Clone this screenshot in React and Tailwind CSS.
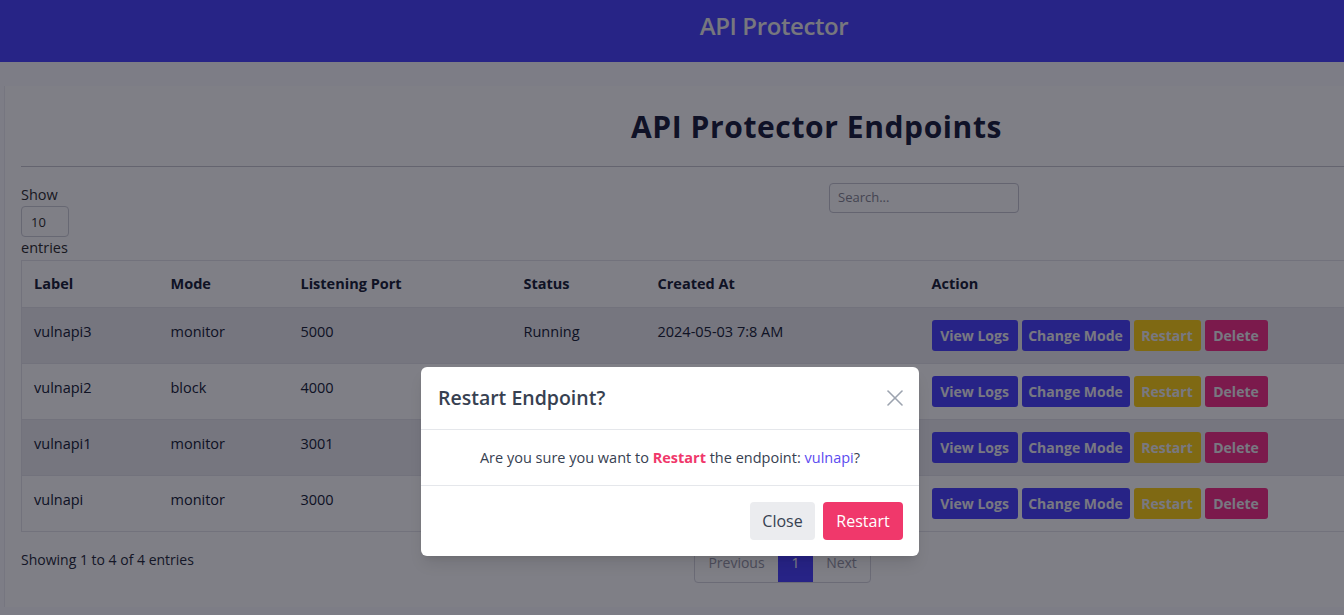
import { X } from 'lucide-react';

const rows = [
  { label: 'vulnapi3', mode: 'monitor', port: '5000', status: 'Running', created: '2024-05-03 7:8 AM' },
  { label: 'vulnapi2', mode: 'block', port: '4000', status: 'Running', created: '2024-05-03 7:8 AM' },
  { label: 'vulnapi1', mode: 'monitor', port: '3001', status: 'Running', created: '2024-05-03 7:8 AM' },
  { label: 'vulnapi', mode: 'monitor', port: '3000', status: 'Running', created: '2024-05-03 7:8 AM' },
];

const font = { fontFamily: '"Open Sans", "Noto Sans", sans-serif' };

export default function App() {
  return (
    <div className="relative w-[1344px] h-[615px] overflow-hidden bg-[#fbfbff] text-[#1f2937]" style={font}>
      {/* Navbar */}
      <nav className="h-[62px] w-[1548px] bg-[#4f48fe] flex items-center justify-center">
        <span className="text-[24px] font-semibold text-[#eeeeee] -mt-[10px] tracking-[-0.4px]">API Protector</span>
      </nav>

      {/* Card */}
      <div className="mt-[24px] ml-[4px] w-[1624px] bg-[#fefeff] border-l border-[#ececf2] px-4 pb-6">
        <h1 className="text-[30px] font-bold text-[#1e2440] text-center pt-[18px] pb-[17px] tracking-[0.6px]">
          API Protector Endpoints
        </h1>
        <hr className="border-[#c8c8d0]" />

        <div className="flex mt-[16px]">
          <div className="w-[808px] text-[14.5px] leading-[20px] text-[#333]">
            <div className="mt-[2px]">Show</div>
            <div className="w-[48px] h-[31px] border border-[#cfd0d8] rounded-[4px] flex items-center pl-[9px] text-[13px] mt-[1px]">10</div>
            <div className="mt-[1px]">entries</div>
          </div>
          <div>
            <div className="w-[190px] h-[30px] border border-[#c8c9d2] rounded-[4px] flex items-center pl-[8px] text-[13px] text-[#8a8a96]">
              Search...
            </div>
          </div>
        </div>

        <table className="mt-[2px] w-[1600px] table-fixed border border-[#e4e4ea] text-[14.5px] text-[#20263a]">
          <thead>
            <tr className="h-[47px] text-left">
              <th className="pl-[12px] w-[149px] font-bold">Label</th>
              <th className="w-[130px] font-bold">Mode</th>
              <th className="w-[223px] font-bold">Listening Port</th>
              <th className="w-[134px] font-bold">Status</th>
              <th className="w-[274px] font-bold">Created At</th>
              <th className="font-bold">Action</th>
            </tr>
          </thead>
          <tbody>
            {rows.map((r, i) => (
              <tr key={r.label} className={`h-[56px] border-t border-[#e4e4ea] ${i % 2 === 0 ? 'bg-[#ececf0]' : ''}`}>
                <td className="pl-[12px] align-top pt-[13px]">{r.label}</td>
                <td className="align-top pt-[13px]">{r.mode}</td>
                <td className="align-top pt-[13px]">{r.port}</td>
                <td className="align-top pt-[13px]">{i === 0 ? r.status : ''}</td>
                <td className="align-top pt-[13px]">{i === 0 ? r.created : ''}</td>
                <td className="align-top pt-[12px]">
                  <div className="flex gap-[4px] text-[14px] font-bold text-[#f0f0f5]">
                    <span className="h-[31px] w-[86px] rounded-[3px] bg-[#4f46fe] flex items-center justify-center">View Logs</span>
                    <span className="h-[31px] w-[108px] rounded-[3px] bg-[#4f46fe] flex items-center justify-center">Change Mode</span>
                    <span className="h-[31px] w-[67px] rounded-[3px] bg-[#ffd318] flex items-center justify-center">Restart</span>
                    <span className="h-[31px] w-[63px] rounded-[3px] bg-[#f6348a] flex items-center justify-center">Delete</span>
                  </div>
                </td>
              </tr>
            ))}
          </tbody>
        </table>

        <div className="flex mt-[9px]">
          <div className="w-[673px] text-[14px] text-[#2a2f40] pt-[8px]">Showing 1 to 4 of 4 entries</div>
          <div className="flex h-[42px] border border-[#d6d6de] rounded-[4px] overflow-hidden text-[14px] text-[#9a9aa8]">
            <span className="w-[83px] flex items-center justify-center">Previous</span>
            <span className="w-[35px] flex items-center justify-center bg-[#4f46fe] text-white">1</span>
            <span className="w-[57px] flex items-center justify-center">Next</span>
          </div>
        </div>
      </div>

      {/* Backdrop */}
      <div className="absolute inset-0 bg-[#00000e]/50" />

      {/* Modal */}
      <div className="absolute left-[421px] top-[367px] w-[498px] bg-white rounded-[6px] shadow-lg">
        <div className="h-[63px] flex items-center justify-between pl-[17px] pr-[10px] border-b border-[#e5e7eb]">
          <h2 className="text-[19.5px] font-semibold text-[#374151]">Restart Endpoint?</h2>
          <X className="w-[28px] h-[28px] text-[#9ca3af]" strokeWidth={1.4} />
        </div>
        <div className="h-[56px] flex items-center justify-center border-b border-[#e5e7eb] text-[14.5px] text-[#374151]">
          <span>
            Are you sure you want to <span className="font-bold text-[#f0386b]">Restart</span> the endpoint:{' '}
            <span className="text-[#5b4cf0]">vulnapi</span>?
          </span>
        </div>
        <div className="h-[70px] flex items-center justify-end gap-[8px] px-[16px]">
          <button className="h-[38px] w-[65px] rounded-[4px] bg-[#ebecef] text-[16px] text-[#374151]">Close</button>
          <button className="h-[38px] w-[80px] rounded-[4px] bg-[#f0386b] text-[16px] text-white">Restart</button>
        </div>
      </div>
    </div>
  );
}
